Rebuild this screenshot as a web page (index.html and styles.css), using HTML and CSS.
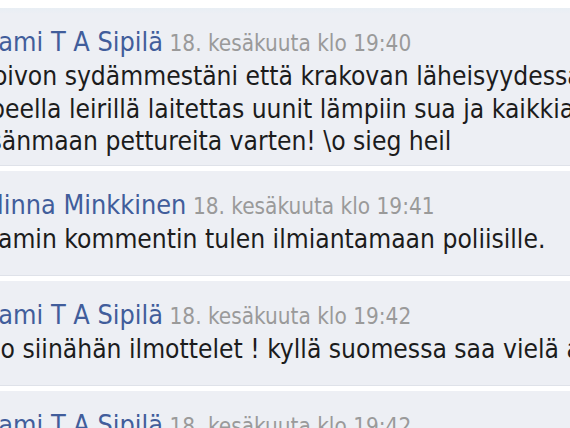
FILE: index.html
```html
<!DOCTYPE html>
<html lang="fi">
<head>
<meta charset="utf-8">
<link rel="stylesheet" href="styles.css">
</head>
<body>
<div class="list">
  <div class="comment first">
    <div class="head"><span class="name">Sami T A Sipilä</span> <span class="time">18. kesäkuuta klo 19:40</span></div>
    <div class="text">Toivon sydämmestäni että krakovan läheisyydessä<br>Jpeella leirillä laitettas uunit lämpiin sua ja kaikkia<br>isänmaan pettureita varten! \o sieg heil</div>
  </div>
  <div class="comment">
    <div class="head"><span class="name">Minna Minkkinen</span> <span class="time">18. kesäkuuta klo 19:41</span></div>
    <div class="text">Samin kommentin tulen ilmiantamaan poliisille.</div>
  </div>
  <div class="comment">
    <div class="head"><span class="name">Sami T A Sipilä</span> <span class="time">18. kesäkuuta klo 19:42</span></div>
    <div class="text">No siinähän ilmottelet ! kyllä suomessa saa vielä ajatella</div>
  </div>
  <div class="comment">
    <div class="head"><span class="name">Sami T A Sipilä</span> <span class="time">18. kesäkuuta klo 19:42</span></div>
  </div>
</div>
</body>
</html>
```

FILE: styles.css
```css
html, body {
  margin: 0;
  padding: 0;
  background: #ffffff;
  overflow: hidden;
  width: 570px;
  height: 428px;
}
body {
  font-family: "DejaVu Sans", "Noto Sans", sans-serif;
  font-stretch: condensed;
}
.list {
  padding-top: 8px;
  display: flex;
  flex-direction: column;
  gap: 5px;
}
.comment {
  box-sizing: border-box;
  background: #edeff4;
  border-bottom: 1px solid #dfe2e9;
  padding: 16px 0 0 0;
  margin-left: -17px;
  min-height: 105px;
  white-space: nowrap;
}
.comment.first {
  min-height: 158px;
  background: linear-gradient(#e8eef4, #edeff4 6px);
}
.head {
  line-height: 36px;
  height: 36px;
}
.name {
  font-size: 26.8px;
  color: #415d9b;
  margin-right: 2px;
}
.time {
  font-size: 22.4px;
  color: #9a9a9a;
}
.text {
  font-size: 26.2px;
  line-height: 32.5px;
  color: #1c1c1c;
}
```
